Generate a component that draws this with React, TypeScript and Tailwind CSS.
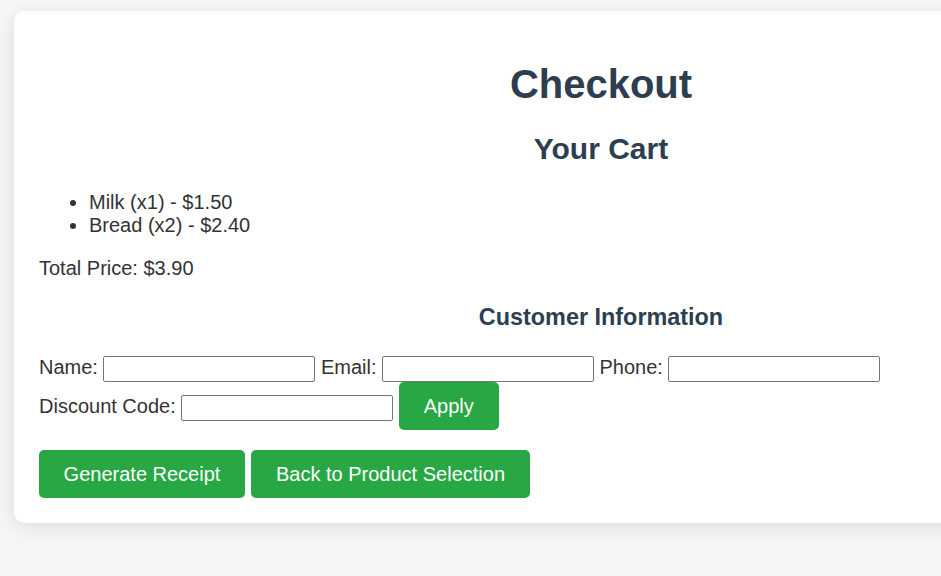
import React from "react";

const cart = [
  { name: "Milk", qty: 1, price: 1.5 },
  { name: "Bread", qty: 2, price: 2.4 },
];

export default function App() {
  const total = cart.reduce((sum, item) => sum + item.price, 0);

  return (
    <div className="min-h-screen bg-[#f5f6f8] pt-[11px] pl-[14px] overflow-hidden font-['Liberation_Sans',Arial,sans-serif] text-[20px] text-[#333]">
      <div className="w-[1174px] bg-white rounded-[10px] p-[25px] shadow-[0_4px_20px_rgba(0,0,0,0.1)]">
        {/* Headings */}
        <h1 className="mt-[25px] text-center text-[40px] leading-[46px] font-bold text-[#2c3e50]">Checkout</h1>
        <h2 className="mt-[25px] text-center text-[30px] leading-[34px] font-bold text-[#2c3e50]">Your Cart</h2>

        <ul className="mt-[25px] list-disc pl-[50px] leading-[23px]">
          {cart.map((item) => (
            <li key={item.name}>
              {item.name} (x{item.qty}) - ${item.price.toFixed(2)}
            </li>
          ))}
        </ul>

        <p className="mt-[20px] leading-[23px]">Total Price: ${total.toFixed(2)}</p>

        <h3 className="mt-[24px] text-center text-[23.4px] leading-[27px] font-bold text-[#2c3e50]">
          Customer Information
        </h3>

        {/* Form */}
        <div className="mt-[25px]">
          <div className="flex items-center h-[26px] gap-[6px]">
            <label className="-mt-[4px]">Name:</label>
            <input type="text" className="w-[212px] h-[26px] -ml-px border border-[#767676] rounded-[2px]" />
            <label className="-mt-[4px]">Email:</label>
            <input type="email" className="w-[212px] h-[26px] border border-[#767676] rounded-[2px]" />
            <label className="-mt-[4px] -ml-px">Phone:</label>
            <input type="tel" className="w-[212px] h-[26px] -ml-px border border-[#767676] rounded-[2px]" />
          </div>
          <div className="flex items-center h-[48px] gap-[6px]">
            <label>Discount Code:</label>
            <input type="text" className="w-[212px] h-[26px] mt-[3px] -ml-px border border-[#767676] rounded-[2px]" />
            <button className="h-[48px] px-[25px] rounded-[5px] bg-[#28a745] text-white">Apply</button>
          </div>
        </div>

        <div className="mt-[20px] flex gap-[6px]">
          <button className="h-[48px] w-[206px] rounded-[5px] bg-[#28a745] text-white">Generate Receipt</button>
          <button className="h-[48px] w-[279px] rounded-[5px] bg-[#28a745] text-white">Back to Product Selection</button>
        </div>
      </div>
    </div>
  );
}
